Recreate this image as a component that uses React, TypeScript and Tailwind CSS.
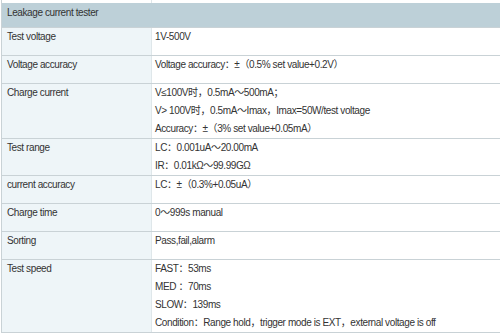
import React from 'react';

type Row = { label: string; lines: string[] };

const rows: Row[] = [
  { label: 'Test voltage', lines: ['1V-500V'] },
  { label: 'Voltage accuracy', lines: ['Voltage accuracy：±（0.5% set value+0.2V）'] },
  {
    label: 'Charge current',
    lines: [
      'V≤100V时，0.5mA～500mA；',
      'V> 100V时，0.5mA～Imax，Imax=50W/test voltage',
      'Accuracy：±（3% set value+0.05mA）',
    ],
  },
  { label: 'Test range', lines: ['LC：0.001uA～20.00mA', 'IR：0.01kΩ～99.99GΩ'] },
  { label: 'current accuracy', lines: ['LC：±（0.3%+0.05uA）'] },
  { label: 'Charge time', lines: ['0～999s manual'] },
  { label: 'Sorting', lines: ['Pass,fail,alarm'] },
  {
    label: 'Test speed',
    lines: [
      'FAST：53ms',
      'MED ：70ms',
      'SLOW：139ms',
      'Condition：Range hold，trigger mode is EXT，external voltage is off',
    ],
  },
];

const App: React.FC = () => {
  return (
    <div
      className="w-[500px] h-[333px] overflow-hidden bg-white text-[10px] tracking-[-0.4px] text-[#333] leading-[18px]"
      style={{ fontFamily: '"Liberation Sans", Arial, "Noto Sans CJK SC", sans-serif' }}
    >
      <div className="ml-[1px] border-l border-[#c9d2d6]">
        <div className="grid grid-cols-[150px_1fr] h-[3px]">
          <div className="border-r border-[#dfe7ea]" />
          <div />
        </div>
        <div className="h-[25px] bg-[#bdd0d8] pl-[5px] pt-[1px] border-b border-[#c9d2d6]">
          Leakage current tester
        </div>
        {rows.map(row => (
          <div
            key={row.label}
            className="grid grid-cols-[150px_1fr] border-b border-[#c9d2d6]"
          >
            <div className="bg-[#eef5f8] border-r border-[#dfe7ea] pl-[5px] min-h-[27px]">
              {row.label}
            </div>
            <div className="pl-[3px] min-h-[27px]">
              {row.lines.map(line => (
                <div key={line}>{line}</div>
              ))}
            </div>
          </div>
        ))}
        <div className="h-[1px] bg-[#c9d2d6]" />
      </div>
    </div>
  );
};

export default App;
